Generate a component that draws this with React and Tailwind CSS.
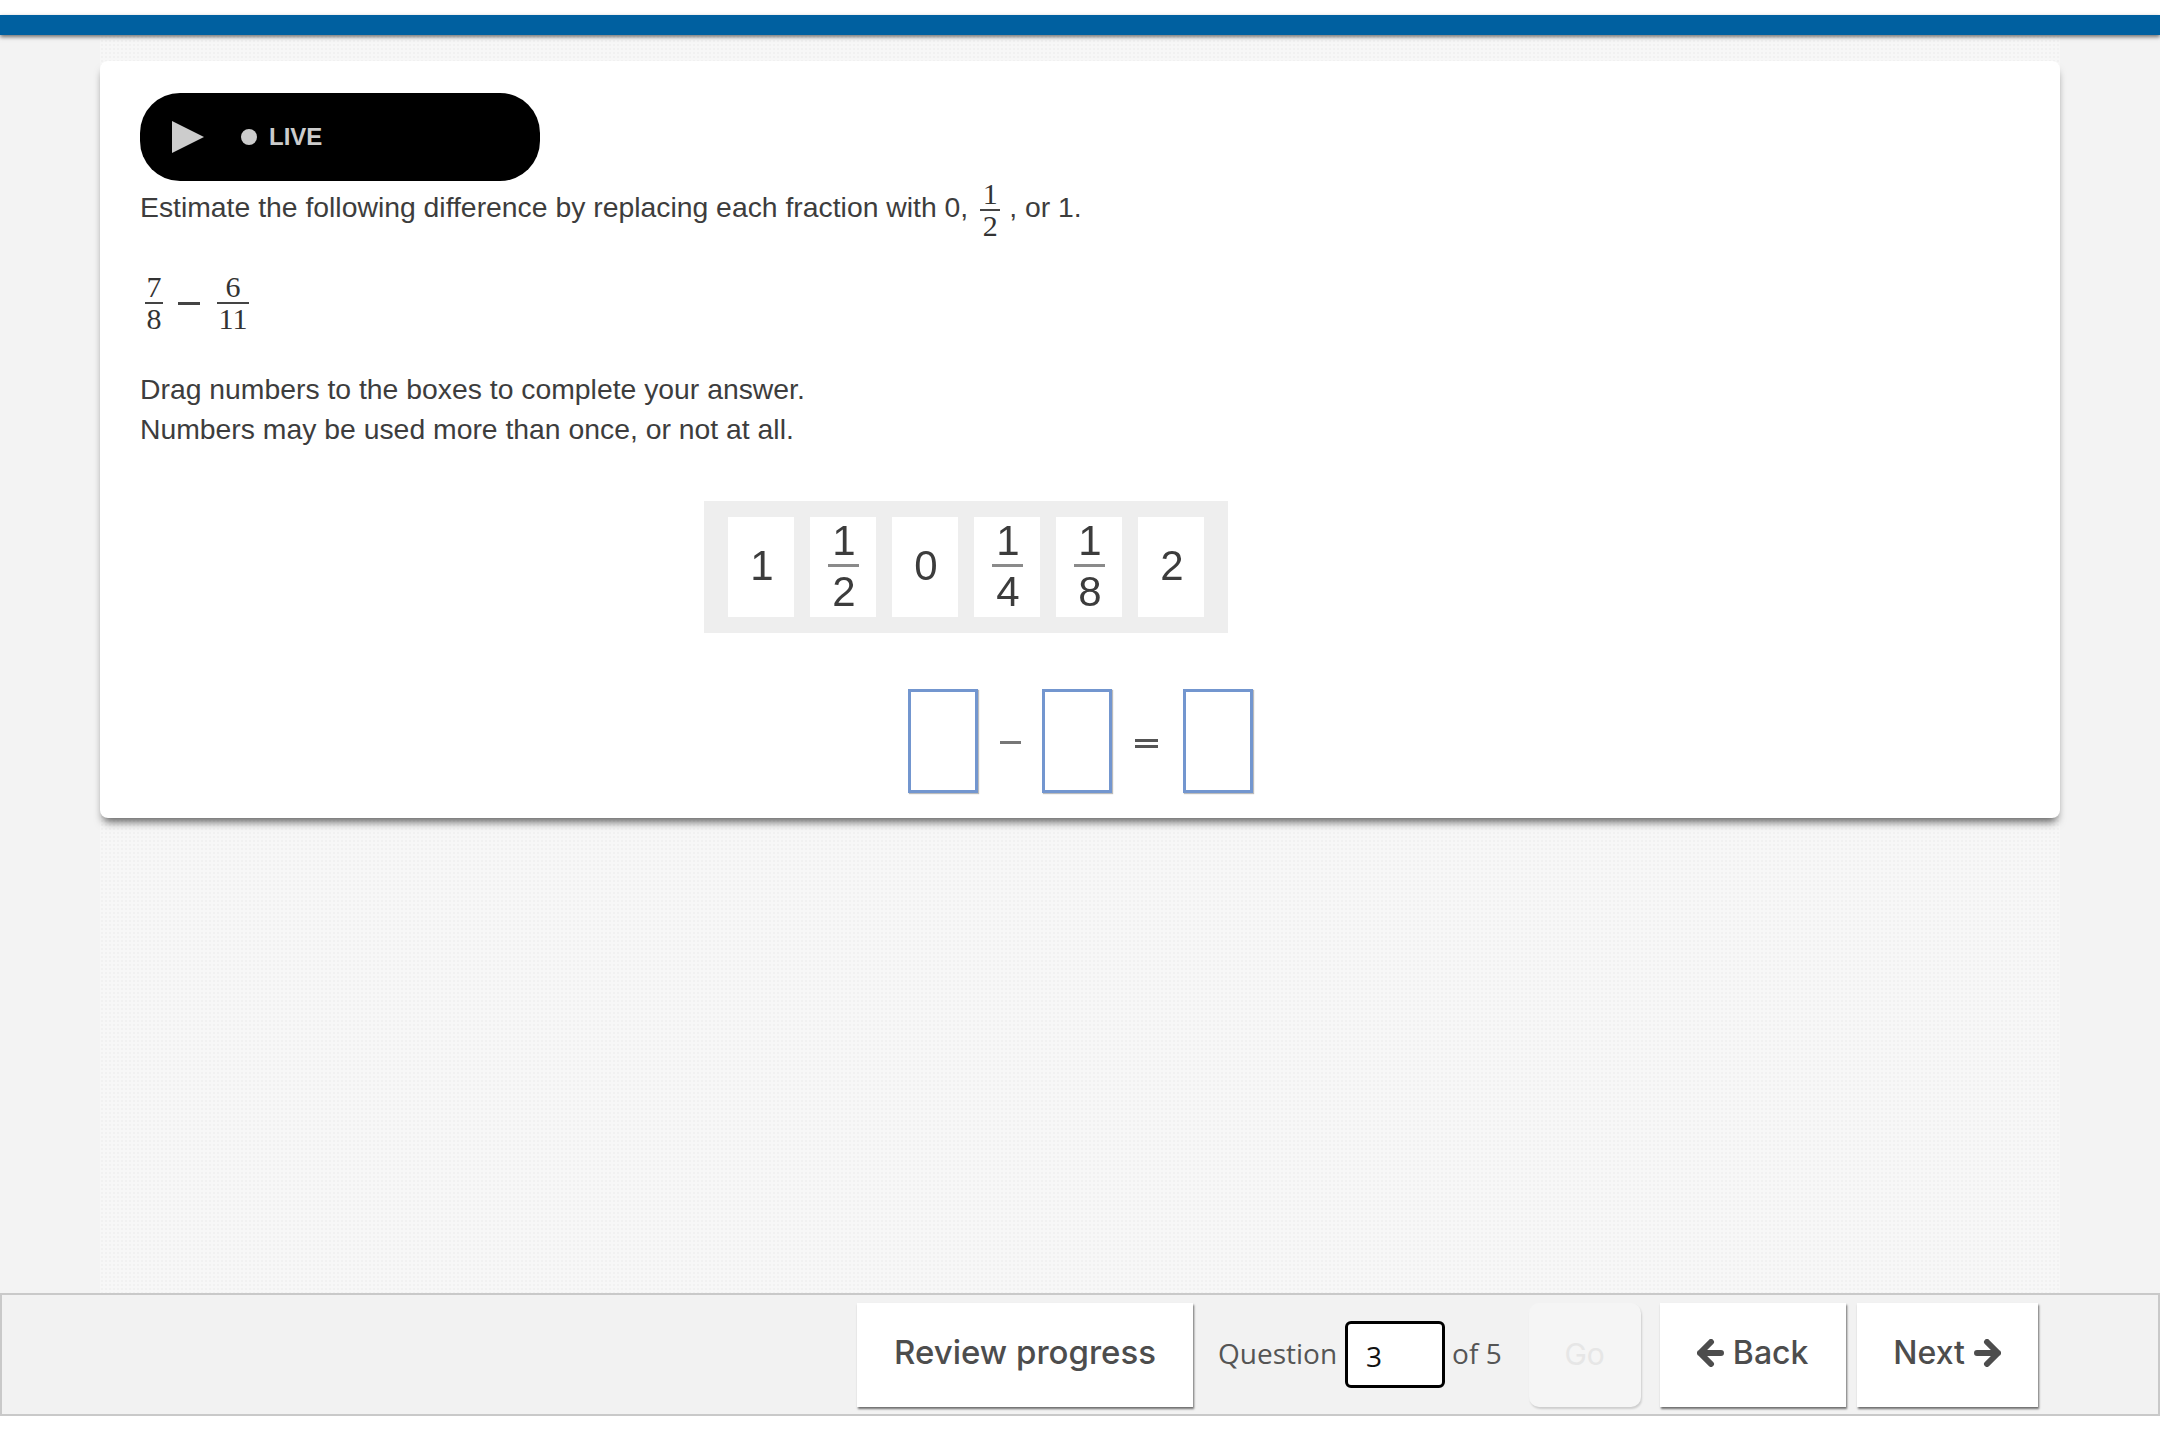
import React from 'react';

const Frac = ({ top, bottom, w = 'w-[20px]', className = '' }) => (
  <span className={`inline-flex flex-col items-center font-['Liberation_Serif',serif] text-[30px] leading-[30px] text-[#333] ${className}`}>
    <span className="h-[30px]">{top}</span>
    <span className={`${w} h-[2px] bg-[#444]`}></span>
    <span className="h-[30px]">{bottom}</span>
  </span>
);

const Tile = ({ value, bottom }) => (
  <div className="w-[66px] h-[100px] bg-white flex flex-col items-center font-['Liberation_Sans',sans-serif] text-[42px] leading-[42px] text-[#3c3c3c] blur-[0.4px]">
    {bottom ? (
      <>
        <span className="h-[42px] mt-[3px] pl-[2px]">{value}</span>
        <span className="w-[31px] h-[3px] mt-[2px] ml-[1px] bg-[#8a8a8a]"></span>
        <span className="h-[42px] mt-[4px] pl-[2px]">{bottom}</span>
      </>
    ) : (
      <span className="mt-[28px] pl-[2px]">{value}</span>
    )}
  </div>
);

const DropBox = () => <div className="w-[70px] h-[104px] border-[3px] border-[#7396cf] bg-white shadow-[1px_1px_1px_#bbb]"></div>;

const NavButton = ({ className = '', children }) => (
  <button className={`h-[104px] bg-white flex items-center justify-center gap-[9px] pb-[4px] font-['Inter',sans-serif] font-medium text-[32px] text-[#4d4d4d] shadow-[1px_2px_2px_rgba(0,0,0,0.55)] ${className}`}>
    {children}
  </button>
);

const Arrow = ({ flip }) => (
  <svg width="27" height="28" viewBox="0 0 27 28" fill="none" stroke="currentColor" strokeWidth="6" strokeLinecap="round" strokeLinejoin="round" className={flip ? 'rotate-180' : ''}>
    <path d="M14 3 L3 14 L14 25 M3 14 L24 14" />
  </svg>
);

export default function App() {
  return (
    <div className="h-[1429px] flex flex-col bg-white font-['Liberation_Sans',sans-serif] overflow-hidden">
      <div className="h-[20px] mt-[15px] bg-[#0060a0] shadow-[0_2px_4px_rgba(0,0,0,0.55)] relative z-10"></div>

      <main className="flex-1 bg-[#f3f3f3]">
        <div className="mx-[100px] h-full pt-[26px] bg-[#f7f7f7] bg-[radial-gradient(#f1f1f1_1px,transparent_1px)] bg-[length:4px_4px]">
          <div className="h-[757px] bg-white rounded-[8px] pl-[40px] pt-[32px] shadow-[0_7px_8px_-3px_rgba(0,0,0,0.6)] text-[28.35px] leading-[40px] text-[#3d3d3d]">
            <div className="w-[400px] h-[88px] bg-black rounded-[40px] flex items-center pl-[32px] text-[#cccccc]">
              <svg width="32" height="32" viewBox="0 0 32 32" fill="currentColor"><path d="M0 0 L32 16 L0 32 Z" /></svg>
              <span className="w-[16px] h-[16px] rounded-full bg-[#cccccc] ml-[37px]"></span>
              <span className="ml-[12px] text-[24px] font-bold">LIVE</span>
            </div>

            <div className="flex items-start h-[62px] mt-[-2px] whitespace-nowrap">
              <span className="mt-[8px]">Estimate the following difference by replacing each fraction with 0,</span>
              <Frac top="1" bottom="2" className="ml-[12px]" />
              <span className="ml-[9px] mt-[8px]">, or 1.</span>
            </div>

            <div className="flex items-center h-[62px] mt-[31px]">
              <Frac top="7" bottom="8" w="w-[18px]" className="ml-[5px]" />
              <span className="w-[22px] h-[3px] bg-[#444] ml-[15px]"></span>
              <Frac top="6" bottom="11" w="w-[32px]" className="ml-[17px]" />
            </div>

            <p className="mt-[35px]">Drag numbers to the boxes to complete your answer.</p>
            <p>Numbers may be used more than once, or not at all.</p>

            <div className="ml-[564px] mt-[52px] w-[524px] h-[132px] bg-[#eeeeee] pl-[24px] pt-[16px] flex gap-[16px]">
              <Tile value="1" />
              <Tile value="1" bottom="2" />
              <Tile value="0" />
              <Tile value="1" bottom="4" />
              <Tile value="1" bottom="8" />
              <Tile value="2" />
            </div>

            <div className="ml-[768px] mt-[56px] flex items-center">
              <DropBox />
              <span className="w-[21px] h-[3px] mt-[3px] bg-[#777] ml-[22px]"></span>
              <div className="ml-[21px]"><DropBox /></div>
              <span className="flex flex-col gap-[3px] mt-[4px] ml-[23px]">
                <span className="w-[23px] h-[3px] bg-[#555]"></span>
                <span className="w-[23px] h-[3px] bg-[#555]"></span>
              </span>
              <div className="ml-[25px]"><DropBox /></div>
            </div>
          </div>
        </div>
      </main>

      <footer className="h-[123px] mb-[13px] border-2 border-[#c9c9c9] bg-[#f2f2f2] flex items-center pl-[855px]">
        <NavButton className="w-[336px] text-[33px]">Review progress</NavButton>
        <span className="ml-[25px] mb-[3px] font-['Open_Sans',sans-serif] text-[28px] text-[#555]">Question</span>
        <div className="ml-[8px] w-[100px] h-[67px] bg-white border-[3px] border-black rounded-[6px] flex items-center pl-[18px] pt-[2px] font-['Open_Sans',sans-serif] text-[28px] text-[#111]">3</div>
        <span className="ml-[7px] mb-[3px] font-['Open_Sans',sans-serif] text-[28px] text-[#555]">of 5</span>
        <button className="ml-[27px] w-[112px] h-[104px] bg-[#f5f5f5] rounded-[10px] shadow-[1px_2px_2px_rgba(0,0,0,0.15)] font-['Inter',sans-serif] text-[30px] text-[#e6e6e6]">Go</button>
        <NavButton className="ml-[19px] w-[186px]"><Arrow />Back</NavButton>
        <NavButton className="ml-[11px] w-[181px]">Next<Arrow flip /></NavButton>
      </footer>
    </div>
  );
}
